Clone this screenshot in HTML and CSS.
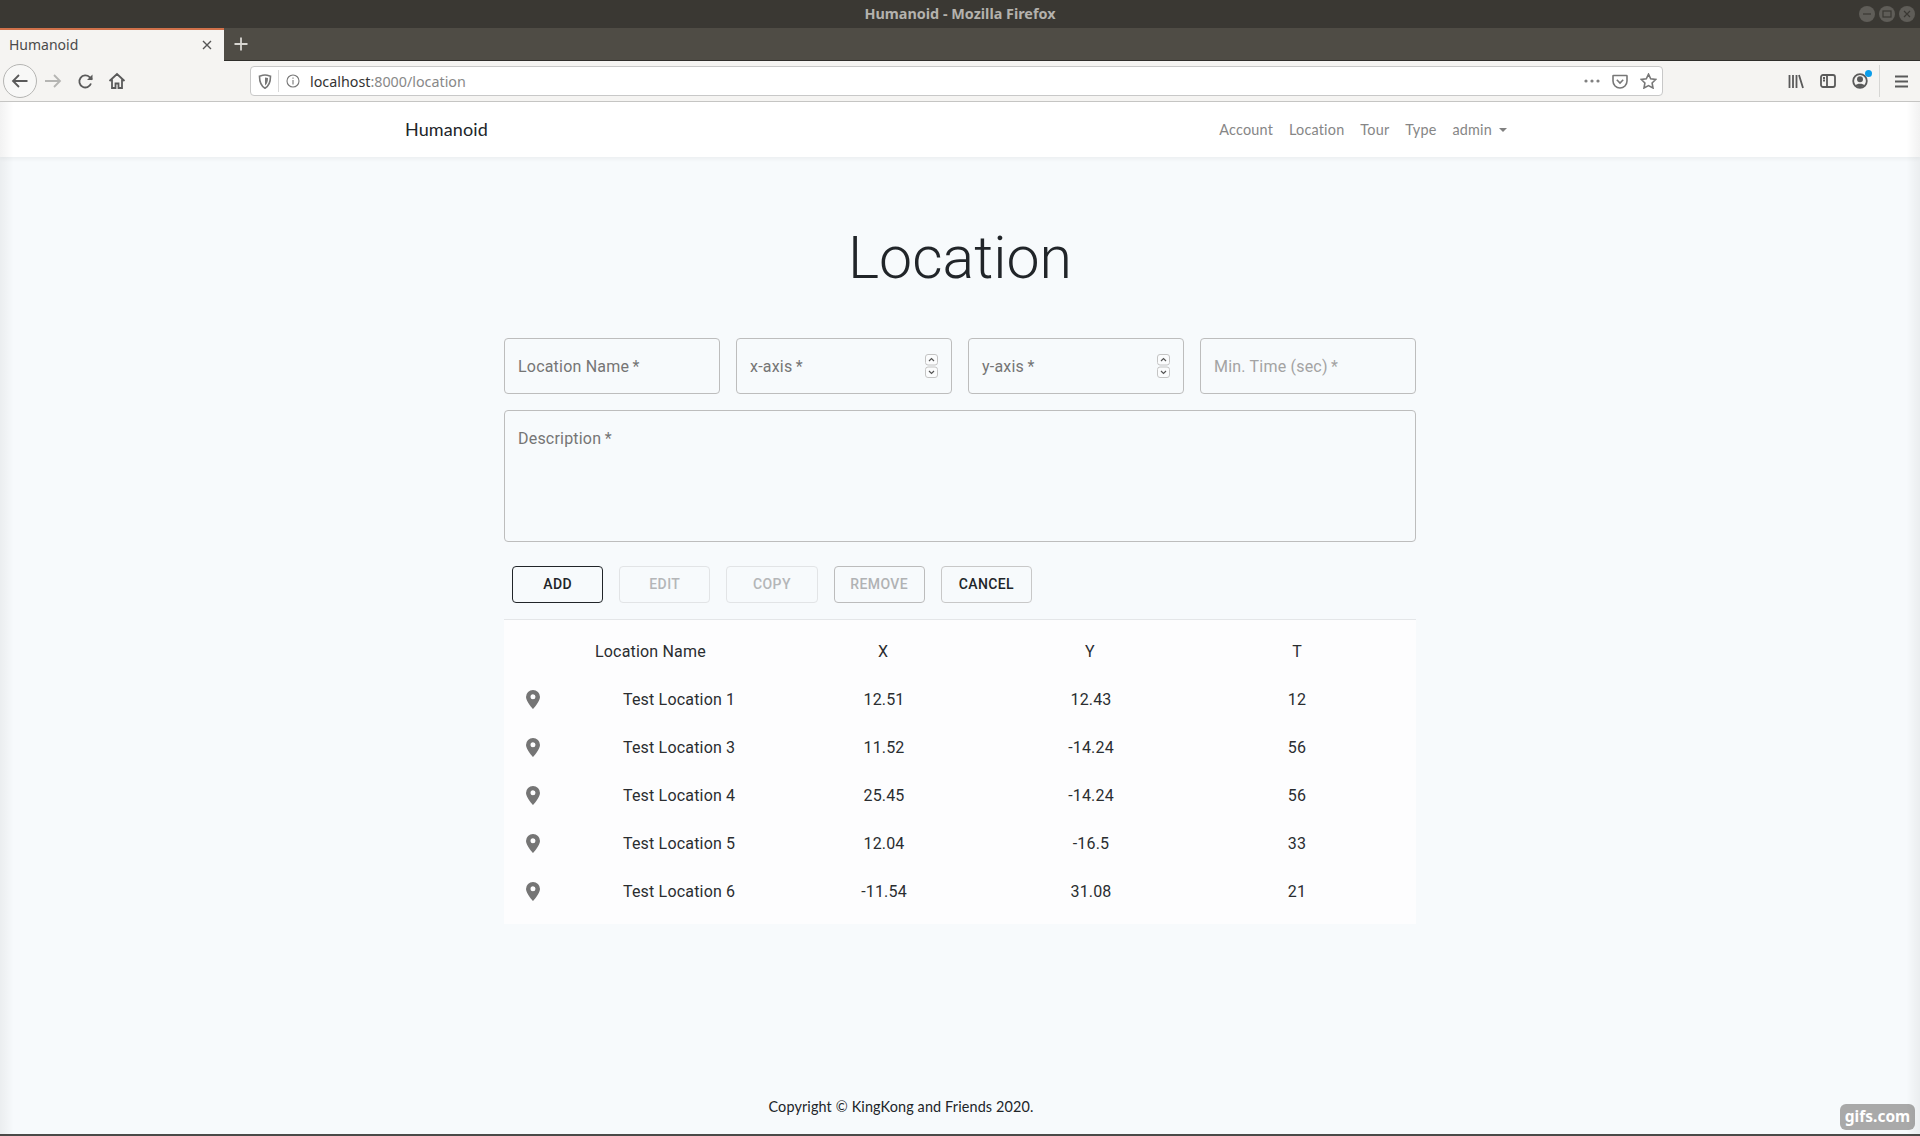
FILE: index.html
```html
<!DOCTYPE html>
<html lang="en">
<head>
<meta charset="utf-8">
<title>Humanoid - Mozilla Firefox</title>
<link rel="stylesheet" href="styles.css">
</head>
<body>
<div class="window">
  <header class="titlebar">
    <span class="title-text">Humanoid - Mozilla Firefox</span>
    <div class="win-controls">
      <span class="win-btn"><svg width="16" height="16" viewBox="0 0 16 16"><path d="M4 8h8" class="win-glyph"/></svg></span>
      <span class="win-btn"><svg width="16" height="16" viewBox="0 0 16 16"><rect x="4" y="5" width="8" height="6" class="win-glyph"/></svg></span>
      <span class="win-btn"><svg width="16" height="16" viewBox="0 0 16 16"><path d="M5 5l6 6M11 5l-6 6" class="win-glyph"/></svg></span>
    </div>
  </header>
  <div class="tabstrip">
    <div class="tab">
      <span class="tab-label">Humanoid</span>
      <svg class="tab-close" width="12" height="12" viewBox="0 0 12 12"><path d="M2 2l8 8M10 2l-8 8"/></svg>
    </div>
    <svg class="newtab" width="14" height="14" viewBox="0 0 14 14"><path d="M7 0.5v13M0.5 7h13"/></svg>
  </div>
  <div class="toolbar">
    <div class="nav-group">
      <span class="back-btn"><svg width="20" height="20" viewBox="0 0 20 20"><path d="M17.5 10H3M9 4l-6 6 6 6" class="tb-stroke-dark"/></svg></span>
      <svg class="fwd" width="18" height="18" viewBox="0 0 18 18"><path d="M1 9h15M10 3l6 6-6 6" class="tb-stroke-light"/></svg>
      <svg class="reload" width="17" height="17" viewBox="0 0 17 17"><path d="M14 10.5A6 6 0 1 1 12.6 4.2L15 6.5" class="tb-stroke-dark"/><path d="M15.5 1.5v5.5h-5.5z" class="tb-fill"/></svg>
      <svg class="home" width="18" height="18" viewBox="0 0 18 18"><path d="M1.5 9L9 2l7.5 7M4 7.5V16h3.5v-4.5h3V16H14V7.5" class="tb-stroke-dark"/></svg>
    </div>
    <div class="urlbar">
      <svg class="shield" width="14" height="15" viewBox="0 0 14 15"><path d="M1.5 2.2C4 1.4 5.5 1 7 1s3 .4 5.5 1.2c0 5-.7 9.3-5.5 12C2.200 11.500 1.500 7.200 1.500 2.200z" class="url-stroke"/><path d="M7 3.500c1 0 2 .2 3 .5 0 3-.6 5.500-3 7.500z" class="url-fill"/></svg>
      <span class="url-sep"></span>
      <svg class="info" width="14" height="14" viewBox="0 0 14 14"><circle cx="7" cy="7" r="6" class="url-stroke-thin"/><path d="M7 6v4.500M7 3.500v1.200" class="url-stroke-thin"/></svg>
      <span class="url-text"><span class="url-host">localhost</span>:8000/location</span>
      <span class="url-spacer"></span>
      <svg class="dots" width="16" height="4" viewBox="0 0 16 4"><circle cx="2" cy="2" r="1.600"/><circle cx="8" cy="2" r="1.600"/><circle cx="14" cy="2" r="1.600"/></svg>
      <svg class="pocket" width="16" height="15" viewBox="0 0 16 15"><path d="M1.500 1.500h13a.500.500 0 0 1 .500.500v5a7 7 0 0 1-14 0V2a.500.500 0 0 1 .500-.500zM4.800 5.800L8 9l3.200-3.200" class="url-stroke"/></svg>
      <svg class="star" width="17" height="16" viewBox="0 0 17 16"><path d="M8.500 1.200l2.200 4.600 5 .7-3.600 3.500.9 5-4.500-2.400L4 15l.9-5L1.300 6.500l5-.7z" class="url-stroke"/></svg>
    </div>
    <div class="tool-group">
      <svg width="16" height="15" viewBox="0 0 16 15"><path d="M1.500 1v13M5 1v13M8.500 1v13M11 1l4 13" class="tb-stroke-dark"/></svg>
      <svg width="16" height="14" viewBox="0 0 16 14"><rect x="1" y="1" width="14" height="12" rx="2" class="tb-stroke-dark"/><path d="M7 1v12M3 4h2M3 6.500h2" class="tb-stroke-dark"/></svg>
      <span class="account">
        <svg width="16" height="16" viewBox="0 0 16 16"><circle cx="8" cy="8" r="6.800" class="tb-stroke-dark"/><circle cx="8" cy="6.300" r="3" class="tb-fill"/><path d="M3.500 12.500c1-2.300 8-2.300 9 0-2.500 2.200-6.500 2.200-9 0z" class="tb-fill"/></svg>
        <span class="account-dot"></span>
      </span>
      <span class="tool-sep"></span>
      <svg width="13" height="13" viewBox="0 0 13 13"><path d="M0 1.500h13M0 6.500h13M0 11.500h13" class="tb-stroke-dark"/></svg>
    </div>
  </div>

  <div class="page">
    <nav class="navbar">
      <a class="brand">Humanoid</a>
      <ul class="navlinks">
        <li>Account</li>
        <li>Location</li>
        <li>Tour</li>
        <li>Type</li>
        <li class="dropdown">admin<span class="caret"></span></li>
      </ul>
    </nav>
    <main class="content">
      <h1 class="heading">Location</h1>
      <section class="form">
        <div class="field-row">
          <div class="field"><span class="label">Location Name&thinsp;*</span></div>
          <div class="field"><span class="label">x-axis&thinsp;*</span>
            <svg class="spinner" width="13" height="24" viewBox="0 0 13 24"><rect x="0.500" y="0.500" width="12" height="10.500" rx="2.500"/><rect x="0.500" y="13" width="12" height="10.500" rx="2.500"/><path d="M4 7l2.500-2.500L9 7M4 17l2.500 2.500L9 17" class="spin-arrow"/></svg>
          </div>
          <div class="field"><span class="label">y-axis&thinsp;*</span>
            <svg class="spinner" width="13" height="24" viewBox="0 0 13 24"><rect x="0.500" y="0.500" width="12" height="10.500" rx="2.500"/><rect x="0.500" y="13" width="12" height="10.500" rx="2.500"/><path d="M4 7l2.500-2.500L9 7M4 17l2.500 2.500L9 17" class="spin-arrow"/></svg>
          </div>
          <div class="field"><span class="label label-faint">Min. Time (sec)&thinsp;*</span></div>
        </div>
        <div class="field field-area"><span class="label">Description&thinsp;*</span></div>
        <div class="buttons">
          <button class="btn btn-primary">Add</button>
          <button class="btn btn-disabled">Edit</button>
          <button class="btn btn-disabled">Copy</button>
          <button class="btn btn-muted">Remove</button>
          <button class="btn btn-cancel">Cancel</button>
        </div>
      </section>
      <section class="table-card">
        <table class="table">
          <colgroup><col class="col-icon"><col class="col-name"><col class="col-num"><col class="col-num"><col class="col-last"></colgroup>
          <thead>
            <tr><th></th><th class="th-name">Location Name</th><th>X</th><th>Y</th><th class="cell-last">T</th></tr>
          </thead>
          <tbody>
            <tr><td><svg class="pin" viewBox="0 0 14 19"><path fill-rule="evenodd" d="M7 0a7 7 0 0 1 7 7C14 11.500 7 19 7 19S0 11.500 0 7a7 7 0 0 1 7-7zm0 4.300a2.500 2.500 0 1 0 0 5 2.500 2.500 0 0 0 0-5z"/></svg></td><td class="td-name">Test Location 1</td><td>12.51</td><td>12.43</td><td class="cell-last">12</td></tr>
            <tr><td><svg class="pin" viewBox="0 0 14 19"><path fill-rule="evenodd" d="M7 0a7 7 0 0 1 7 7C14 11.500 7 19 7 19S0 11.500 0 7a7 7 0 0 1 7-7zm0 4.300a2.500 2.500 0 1 0 0 5 2.500 2.500 0 0 0 0-5z"/></svg></td><td class="td-name">Test Location 3</td><td>11.52</td><td>-14.24</td><td class="cell-last">56</td></tr>
            <tr><td><svg class="pin" viewBox="0 0 14 19"><path fill-rule="evenodd" d="M7 0a7 7 0 0 1 7 7C14 11.500 7 19 7 19S0 11.500 0 7a7 7 0 0 1 7-7zm0 4.300a2.500 2.500 0 1 0 0 5 2.500 2.500 0 0 0 0-5z"/></svg></td><td class="td-name">Test Location 4</td><td>25.45</td><td>-14.24</td><td class="cell-last">56</td></tr>
            <tr><td><svg class="pin" viewBox="0 0 14 19"><path fill-rule="evenodd" d="M7 0a7 7 0 0 1 7 7C14 11.500 7 19 7 19S0 11.500 0 7a7 7 0 0 1 7-7zm0 4.300a2.500 2.500 0 1 0 0 5 2.500 2.500 0 0 0 0-5z"/></svg></td><td class="td-name">Test Location 5</td><td>12.04</td><td>-16.5</td><td class="cell-last">33</td></tr>
            <tr><td><svg class="pin" viewBox="0 0 14 19"><path fill-rule="evenodd" d="M7 0a7 7 0 0 1 7 7C14 11.500 7 19 7 19S0 11.500 0 7a7 7 0 0 1 7-7zm0 4.300a2.500 2.500 0 1 0 0 5 2.500 2.500 0 0 0 0-5z"/></svg></td><td class="td-name">Test Location 6</td><td>-11.54</td><td>31.08</td><td class="cell-last">21</td></tr>
          </tbody>
        </table>
      </section>
    </main>
    <footer class="footer">Copyright © KingKong and Friends 2020.</footer>
    <span class="watermark">gifs.com</span>
  </div>
</div>
</body>
</html>
```
FILE: styles.css
```css
* { box-sizing: border-box; }
html, body { margin: 0; padding: 0; }
body { width: 1920px; height: 1136px; overflow: hidden; font-family: "Roboto", sans-serif; }
.window { display: flex; flex-direction: column; height: 1136px; border-bottom: 2px solid #4a4a48; }

/* Title bar */
.titlebar { position: relative; flex: 0 0 28px; background: #3a3833; display: flex; align-items: center; justify-content: center; padding-bottom: 2px; }
.title-text { font: 700 14.4px "Noto Sans", sans-serif; color: #b4b2ad; }
.win-controls { position: absolute; right: 5px; top: 6px; display: flex; gap: 4px; }
.win-btn { width: 16px; height: 16px; border-radius: 50%; background: #5f5d58; display: block; }
.win-btn svg { display: block; }
.win-glyph { fill: none; stroke: #3a3833; stroke-width: 1.2; }

/* Tab strip */
.tabstrip { flex: 0 0 33px; background: #4f4c45; display: flex; align-items: center; border-bottom: 1px solid #2f2e2b; }
.tab { align-self: stretch; width: 224px; margin-bottom: -1px; background: #f5f4f2; border-top: 2px solid #d0714a; display: flex; align-items: center; justify-content: space-between; padding: 0 11px 2px 9px; }
.tab-label { font: 400 14px "Noto Sans", sans-serif; color: #4a4a4a; }
.tab-close { fill: none; stroke: #555; stroke-width: 1.4; }
.newtab { margin-left: 10px; fill: none; stroke: #d8d6d1; stroke-width: 1.8; }

/* Toolbar */
.toolbar { flex: 0 0 41px; background: #f5f4f2; border-bottom: 1px solid #c6c6c4; display: flex; align-items: center; }
.nav-group { width: 250px; flex: none; display: flex; align-items: center; padding-left: 3px; }
.back-btn { width: 34px; height: 34px; border: 1px solid #b5b5b3; border-radius: 50%; background: #f8f8f7; display: flex; align-items: center; justify-content: center; }
.fwd { margin-left: 7px; }
.reload { margin-left: 15px; }
.home { margin-left: 14px; }
.tb-stroke-dark { fill: none; stroke: #5a5a5a; stroke-width: 1.8; }
.tb-stroke-light { fill: none; stroke: #b5b5b3; stroke-width: 1.8; }
.tb-fill { fill: #5a5a5a; }
.urlbar { width: 1413px; height: 30px; flex: none; background: #fff; border: 1px solid #c8c8c8; border-radius: 4px; display: flex; align-items: center; padding: 0 5px 0 7px; }
.shield { flex: none; }
.url-sep { width: 1px; height: 22px; background: #d8d8d8; margin-left: 6px; }
.info { margin-left: 7px; flex: none; }
.url-stroke { fill: none; stroke: #777; stroke-width: 1.6; }
.url-stroke-thin { fill: none; stroke: #777; stroke-width: 1.1; }
.url-fill { fill: #777; }
.url-text { margin-left: 10px; font: 400 14.3px "Noto Sans", sans-serif; color: #888; }
.url-host { color: #333; }
.url-spacer { flex: 1; }
.dots { fill: #808080; }
.pocket { margin-left: 12px; }
.star { margin-left: 12px; }
.tool-group { flex: 1; display: flex; align-items: center; padding-left: 125px; gap: 16px; }
.account { position: relative; display: flex; }
.account-dot { position: absolute; top: -3px; right: -4px; width: 7px; height: 7px; border-radius: 50%; background: #0a9dea; }
.tool-sep { width: 1px; height: 32px; background: #d6d6d4; margin-left: -5px; margin-right: -1px; }

/* Page */
.page { position: relative; flex: 1; min-height: 0; display: flex; flex-direction: column; background: #f7fafc; color: #212529; }
.page::after { content: ""; position: absolute; inset: 0; pointer-events: none; background: linear-gradient(90deg, rgba(0,0,0,.05), rgba(0,0,0,0) 14px, rgba(0,0,0,0) 1906px, rgba(0,0,0,.05)); }
.navbar { flex: 0 0 55px; background: #fff; box-shadow: 0 2px 4px rgba(0,0,0,.05); display: flex; align-items: center; justify-content: space-between; padding: 0 413px 0 405px; }
.brand { font: 400 18px/24px "Lato", sans-serif; letter-spacing: .1px; color: #212529; margin-top: -2px; }
.navlinks { list-style: none; margin: 0; padding: 0; display: flex; gap: 16px; font: 400 14.4px "Lato", sans-serif; letter-spacing: .2px; color: #868686; }
.dropdown { display: flex; align-items: center; }
.caret { margin-left: 7px; border-top: 4px solid #808080; border-left: 4px solid transparent; border-right: 4px solid transparent; }

.content { flex: 1; width: 912px; margin: 0 auto; }
.heading { margin: 65px 0 44px; font: 300 59px/72px "Roboto", sans-serif; text-align: center; color: #212529; }
.field-row { display: grid; grid-template-columns: repeat(4, 1fr); gap: 16px; }
.field { height: 56px; border: 1px solid #bdbdbd; border-radius: 4px; display: flex; align-items: center; justify-content: space-between; padding: 0 13px 0 13px; }
.label { font: 400 16px "Roboto", sans-serif; letter-spacing: .2px; color: #757575; }
.label-faint { color: #a3a3a3; }
.spinner { fill: #fbfcfd; stroke: #c4c4c4; stroke-width: 1; flex: none; }
.spin-arrow { fill: none; stroke: #555; stroke-width: 1.200; }
.field-area { height: 132px; margin-top: 16px; align-items: flex-start; padding-top: 18px; }
.buttons { display: flex; gap: 16px; padding: 24px 0 16px 8px; border-bottom: 1px solid #e4e6e8; }
.btn { width: 91.2px; height: 37px; padding: 0 0 2px; background: transparent; border: 1px solid; border-radius: 4px; font: 500 14px "Roboto", sans-serif; letter-spacing: .4px; text-transform: uppercase; }
.btn-primary { border-color: #212529; color: #212529; }
.btn-disabled { border-color: #e2e4e6; color: #b4b6b8; }
.btn-muted { border-color: #bcbcbc; color: #b0b2b4; }
.btn-cancel { border-color: #c8c8c8; color: #212529; }

.table-card { background: #fdfdfe; padding: 7px 0 9px; }
.table { width: 912px; border-collapse: collapse; table-layout: fixed; font: 400 16px "Roboto", sans-serif; letter-spacing: .18px; color: #2a2d30; }
.col-icon { width: 56px; }
.col-name { width: 220px; }
.col-num { width: 207px; }
.col-last { width: 222px; }
.table th, .table td { height: 48px; padding: 0 0 0 1px; text-align: center; font-weight: 400; }
.table th { padding: 0 1px 0 0; }
.table .th-name { text-align: left; padding-left: 35px; }
.table .td-name { text-align: left; padding-left: 63px; }
.table .cell-last { padding: 0 16px 0 0; }
.pin { width: 14px; height: 19px; display: block; margin: 1px auto 0; fill: #757575; }

.footer { flex: 0 0 auto; height: 26px; margin-bottom: 14px; padding-right: 118px; text-align: center; font: 400 14.4px/26px "Lato", sans-serif; letter-spacing: .14px; color: #212529; }
.watermark { position: absolute; right: 5px; bottom: 4px; width: 75px; height: 26px; border-radius: 6px; background: #a9a9a9; color: #fff; font: 700 15.5px/25px "Noto Sans", sans-serif; text-align: center; }
```
